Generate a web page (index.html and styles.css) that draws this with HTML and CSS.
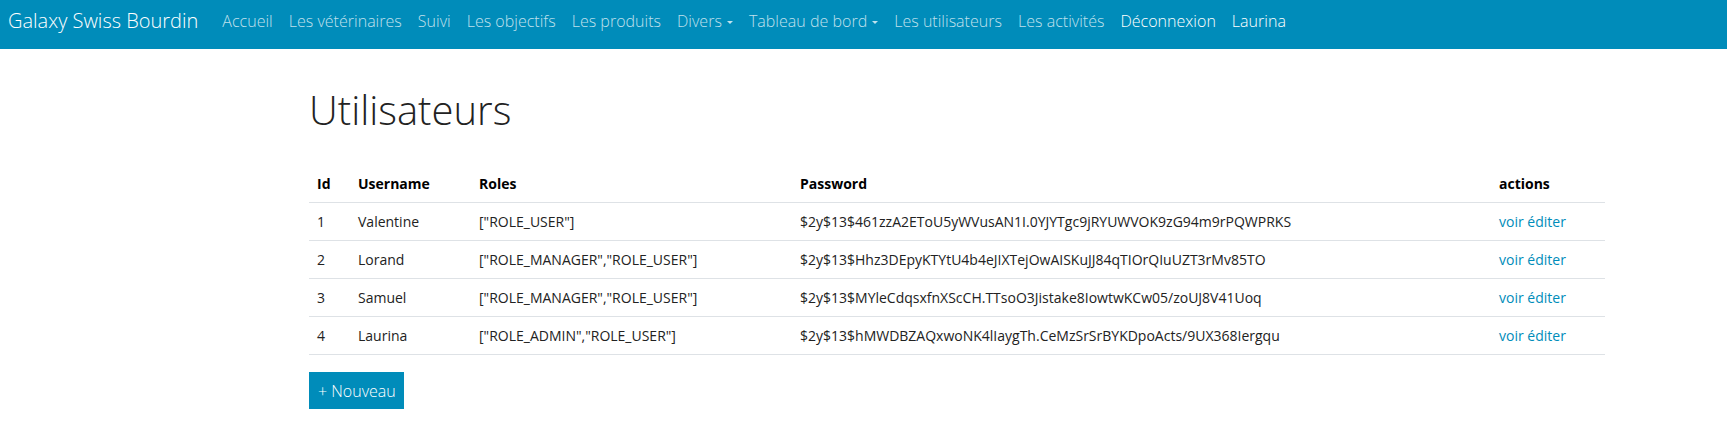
FILE: index.html
```html
<!DOCTYPE html>
<html lang="fr">
<head>
<meta charset="utf-8">
<title>Utilisateurs</title>
<link rel="stylesheet" href="styles.css">
</head>
<body>
<nav class="navbar">
  <a class="brand" href="#">Galaxy Swiss Bourdin</a>
  <ul class="nav">
    <li><a class="nav-link" href="#">Accueil</a></li>
    <li><a class="nav-link" href="#">Les vétérinaires</a></li>
    <li><a class="nav-link" href="#">Suivi</a></li>
    <li><a class="nav-link" href="#">Les objectifs</a></li>
    <li><a class="nav-link" href="#">Les produits</a></li>
    <li><a class="nav-link dropdown" href="#">Divers<span class="caret"></span></a></li>
    <li><a class="nav-link dropdown" href="#">Tableau de bord<span class="caret"></span></a></li>
    <li><a class="nav-link" href="#">Les utilisateurs</a></li>
    <li><a class="nav-link" href="#">Les activités</a></li>
    <li><a class="nav-link active" href="#">Déconnexion</a></li>
    <li><a class="nav-link active" href="#">Laurina</a></li>
  </ul>
</nav>

<main class="container">
  <h1 class="title">Utilisateurs</h1>
  <table class="table">
    <colgroup>
      <col class="c-id">
      <col class="c-user">
      <col class="c-roles">
      <col class="c-pass">
      <col class="c-act">
    </colgroup>
    <thead>
      <tr><th>Id</th><th>Username</th><th>Roles</th><th>Password</th><th>actions</th></tr>
    </thead>
    <tbody>
      <tr><td>1</td><td>Valentine</td><td>["ROLE_USER"]</td><td>$2y$13$461zzA2EToU5yWVusAN1I.0YJYTgc9jRYUWVOK9zG94m9rPQWPRKS</td><td><a href="#">voir</a> <a href="#">éditer</a></td></tr>
      <tr><td>2</td><td>Lorand</td><td>["ROLE_MANAGER","ROLE_USER"]</td><td>$2y$13$Hhz3DEpyKTYtU4b4eJIXTejOwAISKuJJ84qTIOrQIuUZT3rMv85TO</td><td><a href="#">voir</a> <a href="#">éditer</a></td></tr>
      <tr><td>3</td><td>Samuel</td><td>["ROLE_MANAGER","ROLE_USER"]</td><td>$2y$13$MYleCdqsxfnXScCH.TTsoO3Jistake8IowtwKCw05/zoUJ8V41Uoq</td><td><a href="#">voir</a> <a href="#">éditer</a></td></tr>
      <tr><td>4</td><td>Laurina</td><td>["ROLE_ADMIN","ROLE_USER"]</td><td>$2y$13$hMWDBZAQxwoNK4lIaygTh.CeMzSrSrBYKDpoActs/9UX368Iergqu</td><td><a href="#">voir</a> <a href="#">éditer</a></td></tr>
    </tbody>
  </table>
  <a class="btn" href="#">+ Nouveau</a>
</main>
</body>
</html>
```

FILE: styles.css
```css
* { box-sizing: border-box; }

body {
  margin: 0;
  font-family: "Open Sans", "Liberation Sans", sans-serif;
  font-size: 14px;
  line-height: 1.5;
  color: #222;
  background: #fff;
}

a { text-decoration: none; }

.navbar {
  display: flex;
  align-items: center;
  height: 49px;
  padding: 0 0 7px 8px;
  background: #008cba;
}

.brand {
  font-size: 20px;
  font-weight: 300;
  color: #fff;
  margin-right: 16px;
  line-height: 30px;
}

.nav {
  display: flex;
  list-style: none;
  margin: 0;
  padding: 0;
}

.nav-link {
  display: flex;
  align-items: center;
  padding: 0 8px;
  font-size: 16px;
  font-weight: 300;
  line-height: 24px;
  letter-spacing: 0.02px;
  color: rgba(255, 255, 255, 0.75);
}

.nav-link.active { color: #fff; }

.caret {
  display: inline-block;
  margin-left: 5px;
  margin-top: 2px;
  border-top: 3px solid currentColor;
  border-left: 3px solid transparent;
  border-right: 3px solid transparent;
}

.container {
  width: 1296px;
  margin-left: 309px;
}

.title {
  margin: 37px 0 31px;
  font-size: 40px;
  font-weight: 300;
  line-height: 48px;
  color: #222;
}

.table {
  width: 100%;
  table-layout: fixed;
  border-collapse: collapse;
  margin-bottom: 17px;
}

.c-id { width: 41px; }
.c-user { width: 121px; }
.c-roles { width: 321px; }
.c-pass { width: 699px; }
.c-act { width: 114px; }

.table th,
.table td {
  padding: 8px;
  text-align: left;
  border-bottom: 1px solid #dee2e6;
  white-space: nowrap;
  line-height: 21px;
}

.table th { font-weight: 700; color: #000; }

.table td a { color: #008cba; }

.btn {
  display: inline-flex;
  align-items: center;
  height: 37px;
  padding: 0 8px 0 9px;
  background: #008cba;
  color: #fff;
  font-size: 16px;
  font-weight: 300;
}
```
